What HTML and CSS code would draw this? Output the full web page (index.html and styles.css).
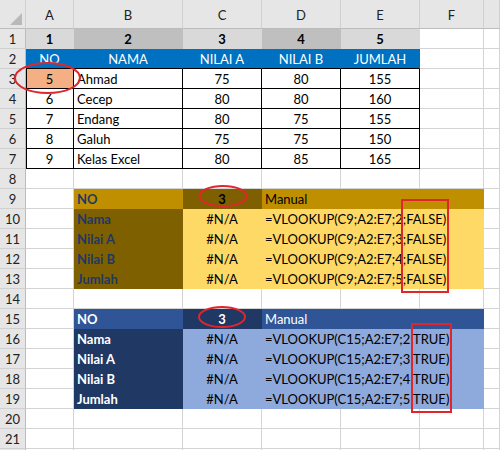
FILE: index.html
```html
<!DOCTYPE html>
<html>
<head>
<meta charset="utf-8">
<link rel="stylesheet" href="styles.css">
</head>
<body>
<div class="sheet">
  <div class="row hdr">
    <div class="c corner"><span class="tri"></span></div>
    <div class="c">A</div><div class="c">B</div><div class="c">C</div><div class="c">D</div><div class="c">E</div><div class="c">F</div><div class="c"></div>
  </div>
  <div class="row">
    <div class="c rh">1</div>
    <div class="c ctr b fill g1">1</div><div class="c ctr b fill g2">2</div><div class="c ctr b fill g1">3</div><div class="c ctr b fill g2">4</div><div class="c ctr b fill g1">5</div><div class="c"></div><div class="c"></div>
  </div>
  <div class="row">
    <div class="c rh">2</div>
    <div class="c ctr fill th">NO</div><div class="c ctr fill th">NAMA</div><div class="c ctr fill th">NILAI A</div><div class="c ctr fill th">NILAI B</div><div class="c ctr fill th">JUMLAH</div><div class="c"></div><div class="c"></div>
  </div>
  <div class="row">
    <div class="c rh">3</div>
    <div class="c ctr td first orange">5</div><div class="c td">Ahmad</div><div class="c ctr td">75</div><div class="c ctr td">80</div><div class="c ctr td">155</div><div class="c"></div><div class="c"></div>
  </div>
  <div class="row">
    <div class="c rh">4</div>
    <div class="c ctr td first">6</div><div class="c td">Cecep</div><div class="c ctr td">80</div><div class="c ctr td">80</div><div class="c ctr td">160</div><div class="c"></div><div class="c"></div>
  </div>
  <div class="row">
    <div class="c rh">5</div>
    <div class="c ctr td first">7</div><div class="c td">Endang</div><div class="c ctr td">80</div><div class="c ctr td">75</div><div class="c ctr td">155</div><div class="c"></div><div class="c"></div>
  </div>
  <div class="row">
    <div class="c rh">6</div>
    <div class="c ctr td first">8</div><div class="c td">Galuh</div><div class="c ctr td">75</div><div class="c ctr td">75</div><div class="c ctr td">150</div><div class="c"></div><div class="c"></div>
  </div>
  <div class="row">
    <div class="c rh">7</div>
    <div class="c ctr td first">9</div><div class="c td">Kelas Excel</div><div class="c ctr td">80</div><div class="c ctr td">85</div><div class="c ctr td">165</div><div class="c"></div><div class="c"></div>
  </div>
  <div class="row">
    <div class="c rh">8</div>
    <div class="c"></div><div class="c"></div><div class="c"></div><div class="c"></div><div class="c"></div><div class="c"></div><div class="c"></div>
  </div>

  <div class="row">
    <div class="c rh">9</div>
    <div class="c"></div><div class="c fill gold navy b">NO</div><div class="c ctr fill brown b">3</div><div class="c span3 fill gold">Manual</div><div class="c"></div>
  </div>
  <div class="row">
    <div class="c rh">10</div>
    <div class="c"></div><div class="c fill brown navy b">Nama</div><div class="c ctr fill yellow">#N/A</div><div class="c span3 fill yellow">=VLOOKUP(C9;A2:E7;2;FALSE)</div><div class="c"></div>
  </div>
  <div class="row">
    <div class="c rh">11</div>
    <div class="c"></div><div class="c fill brown navy b">Nilai A</div><div class="c ctr fill yellow">#N/A</div><div class="c span3 fill yellow">=VLOOKUP(C9;A2:E7;3;FALSE)</div><div class="c"></div>
  </div>
  <div class="row">
    <div class="c rh">12</div>
    <div class="c"></div><div class="c fill brown navy b">Nilai B</div><div class="c ctr fill yellow">#N/A</div><div class="c span3 fill yellow">=VLOOKUP(C9;A2:E7;4;FALSE)</div><div class="c"></div>
  </div>
  <div class="row">
    <div class="c rh">13</div>
    <div class="c"></div><div class="c fill brown navy b">Jumlah</div><div class="c ctr fill yellow">#N/A</div><div class="c span3 fill yellow">=VLOOKUP(C9;A2:E7;5;FALSE)</div><div class="c"></div>
  </div>
  <div class="row">
    <div class="c rh">14</div>
    <div class="c"></div><div class="c"></div><div class="c"></div><div class="c"></div><div class="c"></div><div class="c"></div><div class="c"></div>
  </div>

  <div class="row">
    <div class="c rh">15</div>
    <div class="c"></div><div class="c fill blue white b">NO</div><div class="c ctr fill navybg white b">3</div><div class="c span3 fill blue white">Manual</div><div class="c"></div>
  </div>
  <div class="row">
    <div class="c rh">16</div>
    <div class="c"></div><div class="c fill navybg white b">Nama</div><div class="c ctr fill lblue">#N/A</div><div class="c span3 fill lblue">=VLOOKUP(C15;A2:E7;2;TRUE)</div><div class="c"></div>
  </div>
  <div class="row">
    <div class="c rh">17</div>
    <div class="c"></div><div class="c fill navybg white b">Nilai A</div><div class="c ctr fill lblue">#N/A</div><div class="c span3 fill lblue">=VLOOKUP(C15;A2:E7;3;TRUE)</div><div class="c"></div>
  </div>
  <div class="row">
    <div class="c rh">18</div>
    <div class="c"></div><div class="c fill navybg white b">Nilai B</div><div class="c ctr fill lblue">#N/A</div><div class="c span3 fill lblue">=VLOOKUP(C15;A2:E7;4;TRUE)</div><div class="c"></div>
  </div>
  <div class="row">
    <div class="c rh">19</div>
    <div class="c"></div><div class="c fill navybg white b">Jumlah</div><div class="c ctr fill lblue">#N/A</div><div class="c span3 fill lblue">=VLOOKUP(C15;A2:E7;5;TRUE)</div><div class="c"></div>
  </div>
  <div class="row">
    <div class="c rh">20</div>
    <div class="c"></div><div class="c"></div><div class="c"></div><div class="c"></div><div class="c"></div><div class="c"></div><div class="c"></div>
  </div>
  <div class="row">
    <div class="c rh">21</div>
    <div class="c"></div><div class="c"></div><div class="c"></div><div class="c"></div><div class="c"></div><div class="c"></div><div class="c"></div>
  </div>
  <div class="row">
    <div class="c rh"></div>
    <div class="c"></div><div class="c"></div><div class="c"></div><div class="c"></div><div class="c"></div><div class="c"></div><div class="c"></div>
  </div>

  <svg class="marks" width="500" height="450" viewBox="0 0 500 450">
    <ellipse cx="47.5" cy="78" rx="32.5" ry="15" fill="none" stroke="#e0262b" stroke-width="2"/>
    <ellipse cx="223" cy="196" rx="23.5" ry="10" fill="none" stroke="#e0262b" stroke-width="2"/>
    <ellipse cx="222" cy="317" rx="23" ry="10" fill="none" stroke="#e0262b" stroke-width="2"/>
    <rect x="402" y="200" width="46" height="92" fill="none" stroke="#e0262b" stroke-width="2"/>
    <rect x="412" y="324" width="39" height="88" fill="none" stroke="#e0262b" stroke-width="2"/>
  </svg>
</div>
</body>
</html>
```

FILE: styles.css
```css
html, body {
  margin: 0;
  padding: 0;
  background: #ffffff;
}

.sheet {
  position: relative;
  width: 500px;
  height: 450px;
  overflow: hidden;
  font-family: Lato, "Liberation Sans", sans-serif;
  font-size: 13px;
  color: #000;
}

.row {
  display: grid;
  grid-template-columns: 26px 48px 109px 79px 79px 79px 64px 1fr;
  height: 20px;
}

.row.hdr {
  height: 29px;
}

.c {
  box-sizing: border-box;
  border-right: 1px solid #d4d4d4;
  border-bottom: 1px solid #d4d4d4;
  display: flex;
  align-items: center;
  padding: 2px 3px 0 3px;
  white-space: nowrap;
  overflow: visible;
  line-height: 1;
}

.hdr .c {
  background: #e6e6e6;
  border-right-color: #d0d0d0;
  border-bottom-color: #bcbcbc;
  justify-content: center;
  color: #222;
  padding-top: 3px;
}

.corner {
  position: relative;
}

.tri {
  position: absolute;
  right: 3px;
  bottom: 3px;
  width: 0;
  height: 0;
  border-left: 12px solid transparent;
  border-bottom: 12px solid #b9b9b9;
}

.rh {
  background: #e6e6e6;
  border-right-color: #bcbcbc;
  border-bottom-color: #d0d0d0;
  justify-content: center;
  color: #222;
  padding: 2px 0 0 0;
}

.ctr {
  justify-content: center;
}

.b {
  font-weight: 700;
}

.fill {
  border-color: transparent;
}

.g1 { background: #d9d9d9; }
.g2 { background: #bfbfbf; }

.th {
  background: #0070c0;
  color: #ffffff;
  border-bottom-color: #000;
}

.td {
  border-right-color: #000;
  border-bottom-color: #000;
}

.first {
  box-shadow: inset 1px 0 0 #000;
}

.orange { background: #f4b084; }

.span3 { grid-column: span 3; }

.gold { background: #bf8f00; }
.brown { background: #7f6000; }
.yellow { background: #ffd966; }
.navy { color: #1f3864; }

.blue { background: #2f5597; }
.navybg { background: #203864; }
.lblue { background: #8ea9db; }
.white { color: #ffffff; }

.marks {
  position: absolute;
  left: 0;
  top: 0;
  pointer-events: none;
}
```
